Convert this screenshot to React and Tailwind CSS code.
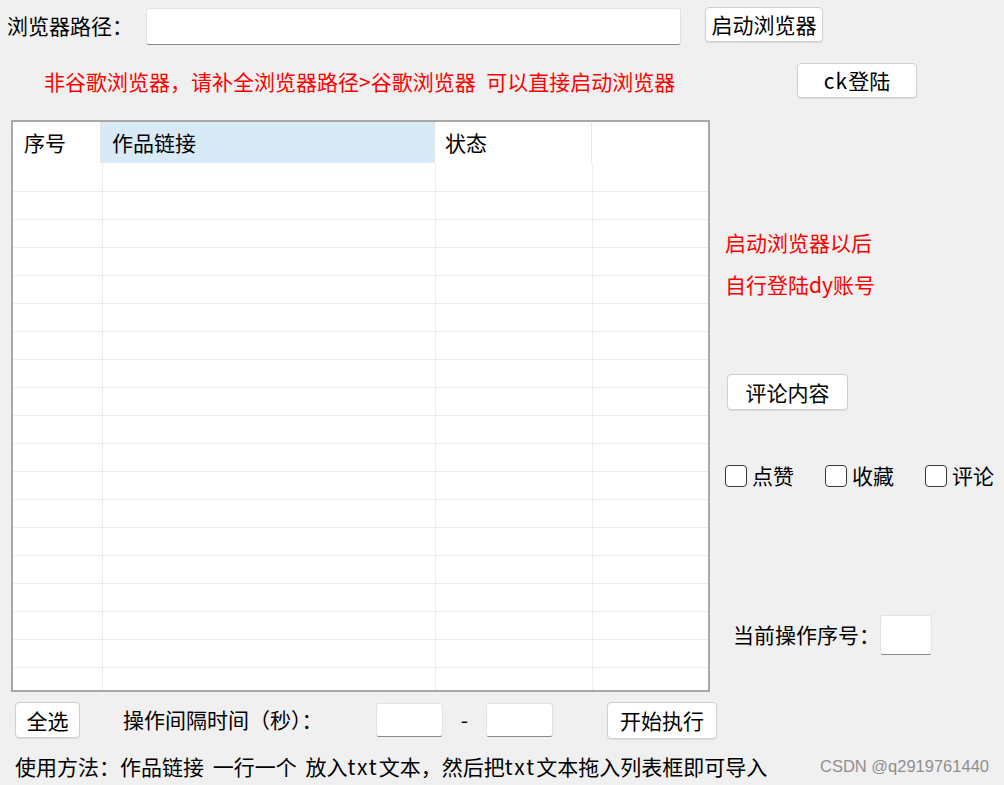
import React from "react";

const rows = Array.from({ length: 20 }, (_, i) => i);

function Btn({ className, children }) {
  return (
    <button
      type="button"
      className={`shrink-0 rounded-[4px] border border-[#cfcfcf] bg-white text-[21px] leading-none text-black shadow-[0_1px_1px_rgba(0,0,0,0.08)] ${className}`}
    >
      {children}
    </button>
  );
}

function Field({ className }) {
  return (
    <div
      className={`shrink-0 rounded-[3px] border border-[#e2e2e2] border-b-[#8a8a8a] bg-white ${className}`}
    />
  );
}

function Check({ label }) {
  return (
    <label className="flex w-[100px] items-center gap-[5px]">
      <span className="h-[22px] w-[22px] rounded-[4px] border-[1.5px] border-[#3a3a3a] bg-white" />
      <span>{label}</span>
    </label>
  );
}

export default function App() {
  return (
    <div className="h-[785px] w-[1004px] overflow-hidden bg-[#f0f0f0] font-['Noto_Sans_CJK_SC',sans-serif] text-[21px] text-black">
      {/* path row */}
      <div className="flex h-[46px] items-start pl-[7px] pt-[7px]">
        <span className="w-[139px] shrink-0 leading-[36px]">浏览器路径：</span>
        <Field className="mt-[1px] h-[37px] w-[535px]" />
        <Btn className="ml-[24px] h-[35px] w-[118px]">启动浏览器</Btn>
      </div>

      {/* hint row */}
      <div className="flex h-[74px] items-start pl-[44px] pt-[17px]">
        <span className="w-[753px] shrink-0 leading-[36px] text-[#ff0000] [word-spacing:6px]">
          非谷歌浏览器，请补全浏览器路径&gt;谷歌浏览器 可以直接启动浏览器
        </span>
        <Btn className="h-[35px] w-[120px]">
          <span className="tracking-[1px]">ck</span>登陆
        </Btn>
      </div>

      {/* main area */}
      <div className="flex h-[572px] pl-[11px]">
        <div className="h-[572px] w-[699px] shrink-0 overflow-hidden border-2 border-[#a8a8a8] bg-white">
          <div className="flex h-[41px] items-center">
            <div className="flex h-full w-[88px] items-center border-r border-[#e6e6e6] pl-[11px]">
              序号
            </div>
            <div className="flex h-full w-[334px] items-center border-r border-[#e6e6e6] bg-[#d9eaf7] pl-[11px]">
              作品链接
            </div>
            <div className="flex h-full w-[157px] items-center border-r border-[#e6e6e6] pl-[10px]">
              状态
            </div>
            <div className="h-full w-[116px]" />
          </div>
          {rows.map((r) => (
            <div
              key={r}
              className={`flex border-b border-[#ededed] ${r === 0 ? "h-[29px]" : "h-[28px]"}`}
            >
              <div className="w-[90px] border-r border-[#ededed]" />
              <div className="w-[333px] border-r border-[#ededed]" />
              <div className="w-[157px] border-r border-[#ededed]" />
              <div className="w-[115px]" />
            </div>
          ))}
        </div>

        <div className="ml-[15px] flex flex-col">
          <div className="mt-[101px] leading-[42px] text-[#ff0000]">
            <div>启动浏览器以后</div>
            <div>自行登陆dy账号</div>
          </div>
          <Btn className="ml-[2px] mt-[69px] h-[36px] w-[121px]">评论内容</Btn>
          <div className="mt-[51px] flex h-[30px] items-center">
            <Check label="点赞" />
            <Check label="收藏" />
            <Check label="评论" />
          </div>
          <div className="mt-[124px] flex items-center pl-[8px]">
            <span className="w-[147px] shrink-0">当前操作序号：</span>
            <Field className="h-[40px] w-[52px]" />
          </div>
        </div>
      </div>

      {/* interval row */}
      <div className="flex h-[56px] items-center">
        <Btn className="ml-[15px] h-[36px] w-[65px]">全选</Btn>
        <span className="ml-[43px] w-[253px] shrink-0">操作间隔时间（秒）：</span>
        <Field className="h-[34px] w-[67px]" />
        <span className="w-[43px] text-center">-</span>
        <Field className="h-[34px] w-[67px]" />
        <Btn className="ml-[54px] h-[37px] w-[110px]">开始执行</Btn>
      </div>

      {/* usage row */}
      <div className="flex h-[37px] items-center justify-between pl-[15px] pr-[15px]">
        <span className="whitespace-nowrap [word-spacing:4px]">
          使用方法：作品链接 一行一个 放入<span className="tracking-[2px]">txt</span>文本，然后把<span className="tracking-[2px]">txt</span>文本拖入列表框即可导入
        </span>
        <span className="font-['Liberation_Sans',sans-serif] text-[16.5px] text-[#8f8f8f]">
          CSDN @q2919761440
        </span>
      </div>
    </div>
  );
}
